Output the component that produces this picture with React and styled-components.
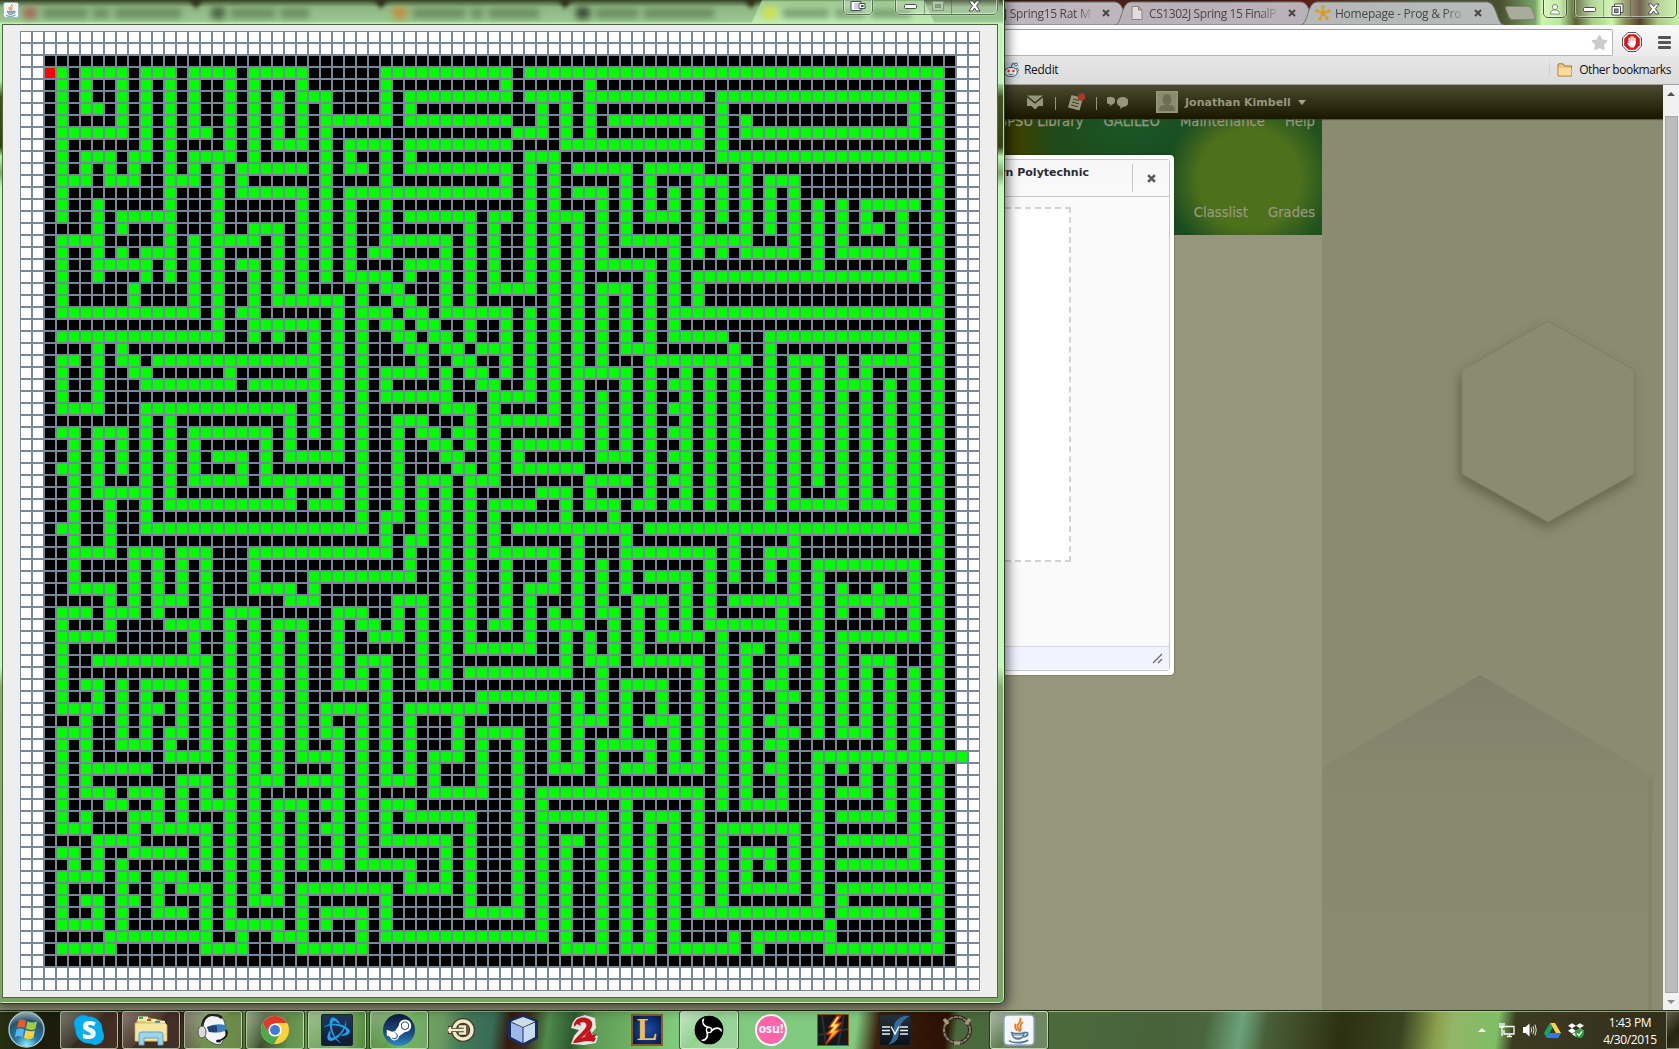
import React from "react";
import styled, { createGlobalStyle, css } from "styled-components";
import { FaSteamSymbol, FaDropbox, FaStar } from "react-icons/fa";
import { SiBattledotnet } from "react-icons/si";

const ui = `"Open Sans", "Noto Sans", sans-serif`;
const verdana = `"DejaVu Sans", sans-serif`;

const Global = createGlobalStyle`
  * { box-sizing: border-box; }
  body { margin: 0; overflow: hidden; font-family: ${ui}; }
`;

/* ---------- maze data: open cells of each row, from row 3 on ---------- */
const MAZE_ROWS = `3 5-8 10-12 14-17 19-23 30-40 42-76
3 5 8 10 12 14 17 19 23 30 40 47 76
3 5 8 10 12 14 17 19 21 23-25 30 32-40 42-45 47-56 58-74 76
3 5-6 8 10 12 14 17 19 21 23 25 30 32 43 45 47 58 74 76
3 8 10 12 14 17 19 21 23 25-30 32-40 43 45 47 49-56 58 60 74 76
3-8 10 12 14-15 17 19 21 23 25 41-43 45 47 56 58 60-74 76
3 10 12 17 19 21-23 25 27-30 32-40 45-56 58 76
3 5-7 9-10 12 14-17 19 25 27 30 32 42-44 58-76
3 5 7 9 12 14 16 18-23 25 27-28 30 32-40 42 44 46-50 52-56 60 76
3-5 7-9 12-14 16 18 25 30 40 42 44 50 52 56-58 60 62-64 76
3 12 16 18-23 25 27-40 42 44 46-48 50 52 54 56 58 60 62 64 76
3 6 12 16 23 25 27 30 42 44 48 50 52 54 56 58 60 62 64 66 68 70-74 76
3 6 8-12 16 23 25 27 30 32-37 39-40 42 44-46 48 50 52-54 56 58 60 62 64 66 68 70 73 76
6 8 12 16 19-21 23 25 27 30 37 39 42 44 46 48 50 56 60 62 64 66 68 70-71 73 76
3-6 12 14 16-19 21 23 25 27 30-35 37 39 42 44 46 48 50-54 56-60 64 66 68 73 76
3 6 8 10-12 14 16 21 23 25 27 29-30 35 37 39 42 44 46 48 54 56 58 60-64 66 68-74 76
3 6-10 12 14 16 18-19 21 23 25 27 32-35 37 39 42 44 46 48-52 54 66 74 76
3 6 10 12 14 16 19 21 23 25 27-30 32 35 37 39 42 44 46 52 54 56-74 76
3 9 14 16 19 21 23 28 30-31 35 37 39-42 44 46 48-50 52 54 56 76
3 9 14 16 19 21-26 28 31-32 35 37 44 46 48 50 52 54 56 76
3-14 16 18-19 26 28-30 32-33 35-40 42 44 46 48 50 52 54-76
16 19-24 26 28 30-31 33-34 37 40 42 44 46 48 50 52 54 76
3-16 19 21 24 26 28 31-32 34-35 37 40 42 44 46 48 50 52 54-58 62-74 76
6 8 24 26 28 32-33 35-36 38-40 42 44 46 48 50-52 59 62 74 76
3-4 6 8-9 11-24 26 28 33 36-37 40 42 44 46 48 52-60 62 64-66 68 70-74 76
3 6 9-10 17 24 26 28 30-33 35 37-38 40 42 44 46-50 52 55 57 59 62 64 66 68 70 74 76
3 6 10-17 19-24 26 28 30 35 38-39 42 44 46 50 52 54-55 57 59 62 64 66 68-70 72 74 76
3 6 24 26 28 30-35 39-42 44 46 48 50 52 55 57 59 62 64 66 68 70 72 74 76
3-6 10-22 24 26 28 35-37 39 44 46 48 50 52 54-55 57 59 62 64 66 68 70 72 74 76
10 12 22 24 26 28 31-33 37 39-44 46 48 50 52 55 57 59 62 64 66 68 70 72 74 76
3-4 6-8 10 12 14-20 22 24 26 28 31 33-34 36-37 39 46 48 50 52 54-55 57 59 62 64 66 68 70 72 74 76
4 6 8 10 12 14 20 22 26 28 31 34-35 37 39 41-46 48 50 52 55 57 59 62 64 66 68 70 72 74 76
4 6 8 10 12 14 16-18 20 22-26 28 31 35-36 39 41 48-50 52 54-55 57 59 62 64 66 68 70 72 74 76
3-4 6 8 10 12 14 18 20 28 31 36-37 39 41-46 52 55 57 59 62 64 66 68 70 72 74 76
4 6 10 12 14-18 20-26 28 31 33-35 37-39 47-50 52 54-55 57 59 62 64 66 68 70 72 74 76
4 6-10 12 22 26 28 31 33 35 37 43-45 47 52 55 57 59 62 64 68 70 72 74 76
4 7 10 12-22 24-26 28 31 33 35 37 39-42 45 47-49 51-52 54-55 57 59 62 64-68 70-72 74 76
4 7 10 28 30-31 33 35 37 39 45 49 74 76
3-4 7 10-28 30 33 35 37 39 41-50 52-74 76
4 7 30 32-33 35 37 39 46 50 59 64 76
4-7 9-11 13-15 19-30 32 35 37 39-44 46 50-57 59 62-64 76
4 9 11 13 15 19 32 35 37 40 44 46 48 50 57 59 62 64 66-74 76
4 9 11 13 15 19 24-32 35 37 40 44 46 48 50 52-55 57 59 62 64 66 74 76
4-7 9 11 13 15 19-22 24 35 37 40 42-44 46 48 50 55 57 64 66 68 71 74 76
7 9 11-13 15 22-24 31-33 35 37 40 42 46 48 51-53 55 57 59-64 66 68-74 76
3-5 7-9 11 15 17-19 26-28 31 33 35 37 40 42 44 46 48-49 51 53 55 57 63 66 68 71 74 76
3 7 12-15 17 19 21-23 26 28-29 31 33 35 37 39-40 42 44-46 49 51 53 55 57-63 66 74 76
3-7 14 17 19 21 23 26 29-31 33 35 37 42 45 47 49 51 53-56 58 63-64 66 68-74 76
3 14 17 19 21 23 26 33 35 37-42 45 47 49 51 58 60-61 63 66 68 76
3 6-15 17 19 21 23 26 28-30 33 35 45 47-49 51-56 58 60 63-64 66 68 70-72 76
3 15 17 19 21 23 26 28 30 33 35 37-45 48 56 58 60 63 66 68 70 72 74 76
3 5-6 8 10-13 15 17 19 21 23 26-28 30 33-35 48 50-53 56 58 60 62-63 66 68 70 72 74 76
3 6 8 10 13 15 17 19 21 23 30 38-44 46 48 50 53 56 58 60 63-64 66 68 70 72 74 76
3-6 8 10-11 13 15 17 19 21 23 25-28 30 32-38 44 46 48 50 53 56 58 60 63 66 68 70 72 74 76
5 8 10 13 15 17 19 21 23 25 28 30 32 36 44 46-48 50 52-54 56 58 60 62-63 66 68 70 72 74 76
3-5 8 10 12-13 15 17 19 21 23 25-26 28 30 32 36 38-41 44 46 50 54 56 58 60 63-64 66 68-70 72 74 76
3 5 8-10 12 15 17 19 21 23 26 28 30 32 36 38 41 44 46 48-52 54 56 58 60 62-63 72 74 76
3 5 12-15 17 19 21 23-26 28 30 32 34-36 38 41 44 46 48 52 54 56 58 60 63 66-78
3 5-10 17 19 21 26 28 30 32 34 38 41 44-46 48 50-52 54-56 58 60 62-63 66 68 70 72 74 76
3 5 13-15 17 19-21 23-26 28 30-32 34 38 41 48 58 60 63 66 70 72 74 76
3 5-7 9-11 13 15 17 19 26 28 34-38 41 43-56 58 60 63 66 68-70 72 74 76
3 7-8 11 13 15-17 19 21-23 25-26 28 30-32 41 43 50 56 58 60-63 66 72 74 76
3 5 9-11 13 17 19 21 23 26 28 30 32-37 41 43-48 50 52-54 56 66 68-72 74 76
3-5 9 11-15 17 19 21 23 25-26 28 30 37 41 43 48 50 52 54 56 58-64 66 74 76
6-9 15 17 19 21 23 26 28 30-35 37 41 43 45-46 48 50 52 54 56 58 64 66 68-74 76
3-4 6 9-13 15 17 19 21 23 26 28 35 37 41 43 45 48 50 52 54 56 58 60-62 64 66 74 76
4 6 8 15 17 19 21 23 25-26 28-32 35 37 41 43 45 48 50 52 54 56 58 60 62 64 66 68-74 76
3-6 8-9 11-13 17 19 21 32 35 37 41 43 45 48 50 52 54 56 58 60 64 66 76
3 8 11 13-15 17 19 21 23-30 32-35 37 41 43 45 48 50 52 54 56 58 60-64 66 68-76
3 5-6 8-9 11 15 17 19-21 23 30 37 41 43 45 48 50 52 54 56 58 66 68 76
3 6 8 11-13 15 17 23 25-28 30 37-41 43 45 48 50 52 54 56-66 68-74 76
3-6 8 15 17-21 23 25 28 30 43 45 48 50 52 54 67 76
7-15 18 21-23 28 30-43 45 48 50 52 54 59 61-67 76
3-7 15-18 23-28 45-48 50-52 54-59 61 67-76`.split("\n");

const SIZE = 80;
const CELLS = (() => {
  const grid = [];
  for (let r = 0; r < SIZE; r++)
    for (let c = 0; c < SIZE; c++)
      grid.push(r < 2 || r > 77 || c < 2 || c > 77 ? "outside" : "wall");
  MAZE_ROWS.forEach((row, i) => {
    row.split(" ").forEach((span) => {
      const [a, b = a] = span.split("-").map(Number);
      for (let c = a; c <= b; c++) grid[(i + 3) * SIZE + c] = "path";
    });
  });
  grid[3 * SIZE + 2] = "rat";
  return grid;
})();

const CELL_COLORS = { outside: "#fff", wall: "#000", path: "#0f0", rat: "#f00" };

/* ---------- desktop ---------- */
const Desktop = styled.div`
  position: relative;
  width: 1679px;
  height: 1049px;
  overflow: hidden;
  display: flex;
  flex-direction: column;
  background: #96967c;
`;

/* ---------- browser window ---------- */
const Browser = styled.div`
  height: 1010px;
  display: flex;
  flex-direction: column;
`;
const TabStrip = styled.div`
  height: 25px;
  flex: none;
  display: flex;
  align-items: flex-end;
  padding-left: 929px;
  position: relative;
  background: linear-gradient(90deg, #2f160f 0 1000px, #4a2018 1120px, #2d1614 1200px, #5a1f17 1300px, #46502c 1420px, #4a4f30 1500px,
    #7aa568 1535px, #cdf7ab 1542px, #b8e89a 1560px, #566230 1576px, #a5cd84 1592px, #c8f5a6 1612px, #8a8f5a 1625px, #53402a 1640px, #a8cc86 1658px, #c4f0a4 1679px);
`;
const TabShape = styled.svg`
  position: absolute;
  inset: 0;
  width: 100%;
  height: 100%;
`;
const Tab = styled.div`
  position: relative;
  width: 203px;
  height: 24px;
  margin-right: -17px;
  padding: 0 17px 0 14px;
  display: flex;
  align-items: center;
  font-size: 12px;
  color: #4b4544;
`;
const TabIcon = styled.svg`
  position: relative;
  width: 16px;
  height: 16px;
  flex: none;
`;
const TabTitle = styled.span`
  position: relative;
  flex: none;
  margin-left: ${(p) => p.$ml}px;
  white-space: nowrap;
  letter-spacing: ${(p) => p.$ls || 0}px;
  mask-image: linear-gradient(90deg, #000 86%, rgba(0, 0, 0, 0.25));
`;
const TabClose = styled.div`
  position: absolute;
  right: 22px;
  top: 8px;
  svg { display: block; }
`;
const NewTab = styled.div`
  width: 27px;
  height: 14px;
  margin: 0 0 5px 20px;
  border-radius: 3px;
  transform: skewX(22deg);
  background: #a9ab9c;
  border: 1px solid #84876f;
`;
const Controls = styled.div`
  position: absolute;
  top: -4px;
  right: ${(p) => p.$right}px;
  height: 22px;
  display: flex;
  border: 1px solid ${(p) => p.$line || "#4a5638"};
  border-radius: 0 0 5px 5px;
  box-shadow: inset 0 0 0 1px rgba(255, 255, 255, 0.45), 0 0 0 1px rgba(255, 255, 255, 0.2);
`;
const Control = styled.div`
  width: ${(p) => p.$w}px;
  display: grid;
  place-items: center;
  padding-top: 4px;
  background: rgba(255, 255, 255, 0.18);
  & + & { border-left: 1px solid rgba(60, 80, 50, 0.45); }
`;

const Toolbar = styled.div`
  height: 31px;
  flex: none;
  display: flex;
  align-items: center;
  padding: 0 8px 0 0;
  background: linear-gradient(#fafafa, #ebebeb);
`;
const Omnibox = styled.div`
  width: 1613px;
  height: 27px;
  margin-top: 4px;
  border: 1px solid #b4b4b4;
  border-top-color: #9d9d9d;
  border-radius: 2px;
  background: #fff;
  display: flex;
  align-items: center;
  justify-content: flex-end;
  padding-right: 4px;
  color: #cbcbcb;
  font-size: 17px;
`;
const BlockBadge = styled.svg`
  width: 20px;
  height: 20px;
  margin: 3px 0 0 9px;
`;
const Menu = styled.div`
  width: 13px;
  height: 13px;
  margin: 3px 0 0 auto;
  display: flex;
  flex-direction: column;
  justify-content: space-between;
  &::before, &::after, & > i { content: ""; height: 3px; background: #565656; border-radius: 1px; }
`;
const BookmarksBar = styled.div`
  height: 29px;
  flex: none;
  display: flex;
  align-items: center;
  padding: 0 8px 1px 1003px;
  background: linear-gradient(#e6e6e6, #dcdcdc);
  border-bottom: 1px solid #a0a0a0;
  font-size: 12px;
  color: #111;
`;
const Bookmark = styled.div`
  display: flex;
  align-items: center;
  gap: ${(p) => p.$gap}px;
  letter-spacing: ${(p) => p.$ls || 0}px;
  svg { display: block; }
`;
const Separator = styled.div`
  width: 1px;
  height: 22px;
  margin: 0 7px 0 auto;
  background: linear-gradient(#dde3ea, #bccbdc, #dde3ea);
`;

const Viewport = styled.div`
  flex: 1;
  display: flex;
  min-height: 0;
`;
const Page = styled.div`
  position: relative;
  isolation: isolate;
  width: 1663px;
  overflow: hidden;
  display: flex;
  flex-direction: column;
  background: #8b8b72;
`;
const NavBar = styled.div`
  height: 34px;
  flex: none;
  display: flex;
  align-items: center;
  padding-left: 1026px;
  background: linear-gradient(#4c4b31, #1b1900 95%);
  box-shadow: 0 1px 1px rgba(60, 58, 30, 0.6);
  position: relative;
  z-index: 1;
`;
const NavIcon = styled.svg`
  width: ${(p) => p.$w}px;
  height: 22px;
  margin-left: ${(p) => p.$ml || 0}px;
  flex: none;
`;
const NavDivider = styled.div`
  width: 1px;
  height: 13px;
  margin: 3px 0 0 ${(p) => p.$ml}px;
  background: #96967c;
`;
const Avatar = styled.svg`
  width: 22px;
  height: 22px;
  margin-left: 28px;
`;
const UserName = styled.div`
  margin-left: 7px;
  font: bold 11px ${verdana};
  letter-spacing: 0;
  color: #96967c;
  white-space: nowrap;
`;
const Caret = styled.div`
  margin-left: 7px;
  border: 4px solid transparent;
  border-top: 5px solid #a5a58a;
  border-bottom: 0;
`;
const PageBody = styled.div`
  width: 1322px;
  flex: 1;
  background: #96967c;
`;
const Banner = styled.div`
  height: 116px;
  display: flex;
  flex-direction: column;
  justify-content: space-between;
  align-items: flex-end;
  padding: 0 7px 14px 0;
  background:
    radial-gradient(ellipse 84px 82px at 1249px 60px, #4d701c 0 60%, rgba(77, 112, 28, 0) 100%),
    radial-gradient(ellipse 70px 50px at 1130px 0, #195a29, rgba(25, 90, 41, 0)),
    linear-gradient(90deg, #313500 1004px, #3b4104 1020px, #204a1a 1055px, #194a20 1170px, #20521f 1322px);
  overflow: hidden;
`;
const NavLinks = styled.div`
  display: flex;
  gap: 20px;
  margin-top: ${(p) => p.$mt || 0}px;
  font: 13.2px/16px ${verdana};
  -webkit-text-stroke: 0.25px #97977d;
  color: #97977d;
  white-space: nowrap;
`;
const Hexes = styled.svg`
  position: absolute;
  left: 1322px;
  top: 34px;
`;
const Dialog = styled.div`
  position: absolute;
  left: 600px;
  top: 70px;
  width: 574px;
  height: 520px;
  z-index: 2;
  padding: 4px;
  border-radius: 4px;
  background: #fff;
  box-shadow: 0 0 2px rgba(0, 0, 0, 0.45);
`;
const DialogFrame = styled.div`
  height: 100%;
  border: 1px solid #c9c9c9;
  border-radius: 3px;
  display: flex;
  flex-direction: column;
  background: #fafafa;
`;
const DialogHeader = styled.div`
  height: 37px;
  display: flex;
  border-bottom: 1px solid #c8c8c8;
  background: linear-gradient(#f7f7f7, #fafafa);
`;
const DialogTitle = styled.div`
  flex: 1;
  padding: 6px 43px 0 0;
  text-align: right;
  white-space: nowrap;
  font: bold 11px/14px ${verdana};
  color: #2c2a30;
`;
const DialogClose = styled.div`
  width: 37px;
  height: 28px;
  margin-top: 4px;
  border-left: 1px solid #c6c6c6;
  display: grid;
  place-items: center;
`;
const DialogBody = styled.div`
  flex: 1;
  padding: 10px 98px 84px 20px;
`;
const DropZone = styled.div`
  height: 100%;
  border: 2px dashed #d2d2d2;
  background: #fff;
`;
const DialogFooter = styled.div`
  height: 24px;
  border-top: 1px solid #d4d6e0;
  background: #f1f3ff;
  display: flex;
  justify-content: flex-end;
  align-items: center;
  padding-right: 6px;
`;
const Scrollbar = styled.div`
  width: 16px;
  background: #f1f1f1;
  display: flex;
  flex-direction: column;
  align-items: center;
`;
const ScrollArrow = styled.div`
  height: ${(p) => p.$h}px;
  width: 16px;
  display: grid;
  place-items: center;
  &::before {
    content: "";
    border: 4px solid transparent;
    ${(p) => p.$down ? css`border-top-color: #888; border-bottom: 0;` : css`border-bottom-color: #505050; border-top: 0;`}
  }
  ${(p) => !p.$down && css`padding-bottom: 13px;`}
`;
const ScrollThumb = styled.div`
  flex: 1;
  width: 13px;
  background: #bcbcbc;
  border: 1px solid #a8a8a8;
`;

/* ---------- maze window ---------- */
const MazeWindow = styled.div`
  position: absolute;
  z-index: 5;
  left: -4px;
  top: -4px;
  width: 1009px;
  height: 1008px;
  border: 1px solid #2e3c26;
  border-radius: 6px;
  padding: 28px 7px 7px 6px;
  background:
    linear-gradient(90deg, transparent 1000px, #caf9c3 1001px, #b8efb0 1004px, #d9ffd4 1007px) 0 27px / 100% 60px no-repeat,
    linear-gradient(#b8efb0 0 84px, #41541e 100px, #33430e 150px, #bdf5ae 160px, #7ea86c 176px, #c3f8bb 190px, #c3f8bb 670px, #86ad72 690px, #7da465 100%);
  box-shadow: inset 0 0 0 1px rgba(214, 255, 205, 0.8), 1px 2px 12px 2px rgba(0, 0, 0, 0.55);
`;
const TitleBar = styled.div`
  position: absolute;
  left: 1px;
  right: 1px;
  top: 0;
  height: 28px;
  overflow: hidden;
  border-radius: 0 5px 0 0;
  background: linear-gradient(#33431f 3px, #5c7650 6px, #8fb583 10px, #98c78f 24px, #caf3c0 27px);
`;
const TabGhost = styled.div`
  position: absolute;
  left: ${(p) => p.$x}px;
  top: 10px;
  display: flex;
  gap: 6px;
  filter: blur(3px);
  & > i { height: 9px; margin-top: 2px; background: rgba(50, 72, 44, 0.42); }
  & > b { width: 14px; height: 12px; border-radius: 4px; background: ${(p) => p.$dot}; }
`;
const TabGap = styled.div`
  position: absolute;
  top: 2px;
  left: ${(p) => p.$x}px;
  border: 7px solid transparent;
  border-top: 10px solid #2c2c14;
  border-bottom: 0;
  filter: blur(2px);
`;
const ActiveGhost = styled.div`
  position: absolute;
  left: 752px;
  top: 3px;
  width: 186px;
  height: 26px;
  background: linear-gradient(#9cc98e, #c4f3bb);
  clip-path: polygon(12px 0, 174px 0, 186px 100%, 0 100%);
  filter: blur(1px);
`;
const AppIcon = styled.div`
  position: absolute;
  left: 5px;
  top: 5px;
  svg { display: block; }
`;
const MazePanel = styled.div`
  position: relative;
  height: 972px;
  padding: 6px 0 0 17px;
  outline: 1px solid #4c6640;
  background: #eee;
`;
const MazeGrid = styled.div`
  display: grid;
  grid-template-columns: repeat(${SIZE}, 12px);
  grid-auto-rows: 12px;
  width: 960px;
`;
const Cell = styled.div`
  border: 1px solid #778899;
  background: ${(p) => CELL_COLORS[p.$kind]};
`;

/* ---------- taskbar ---------- */
const Taskbar = styled.div`
  position: relative;
  height: 39px;
  display: flex;
  align-items: stretch;
  border-top: 1px solid #1f2b16;
  box-shadow: inset 0 1px 0 rgba(190, 225, 165, 0.65);
  background:
    linear-gradient(100deg, transparent 1190px, rgba(130, 200, 160, 0.6) 1225px, transparent 1250px),
    linear-gradient(98deg, #27300f 0, #1a1c0c 50px, #3a2116 120px, #37221a 180px, #6a8a48 205px, #62833e 240px, #2f4420 262px, #5c8a44 290px,
      #6fae5a 340px, #3f7a2c 372px, #68b452 400px, #6c9a62 440px, #417858 462px, #386c55 490px, #331c10 507px, #3a2c18 525px, #4d8a4c 545px,
      #2f5a30 570px, #5d9a55 590px, #72b866 640px, #80ca7e 670px, #7fca80 850px, #3b200c 872px, #2c1003 940px, #4a683c 950px, #4b6a3c 1060px,
      #48623a 1150px, #4c6a42 1240px, #3f4a26 1290px, #2d3012 1330px, #3a4320 1390px, #8aa04e 1425px, #93b567 1440px, #7fbf66 1485px, #3b3c20 1502px, #3a351f 1560px, #2f2c18 1679px);
`;
const Start = styled.div`
  width: 58px;
  padding: 0 0 0 8px;
`;
const Slot = styled.div`
  width: 62px;
  padding: 0 2px;
  display: flex;
`;
const SlotFace = styled.div`
  flex: 1;
  display: grid;
  place-items: center;
  border-radius: 3px;
  ${(p) => p.$open && css`
    border: 1px solid rgba(225, 240, 210, 0.65);
    box-shadow: 0 0 0 1px rgba(20, 30, 12, 0.65);
    background: linear-gradient(135deg, rgba(255, 255, 255, ${p.$open === "active" ? 0.55 : 0.4}), rgba(255, 255, 255, 0.12) 48%, rgba(255, 255, 255, ${p.$open === "active" ? 0.2 : 0.06}) 50%);
  `}
`;
const Tray = styled.div`
  margin-left: auto;
  display: flex;
  align-items: center;
  gap: 7px;
  padding-right: 9px;
`;
const TrayCaret = styled.div`
  border: 4px solid transparent;
  border-bottom: 4px solid #eee;
  border-top: 0;
  margin-right: 6px;
`;
const Clock = styled.div`
  width: 54px;
  margin-left: 11px;
  padding-top: 2px;
  text-align: center;
  color: #fff;
  font-size: 12px;
  line-height: 17px;
  white-space: nowrap;
  letter-spacing: -0.35px;
`;
const ShowDesktop = styled.div`
  width: 13px;
  border: 1px solid #8f937c;
  border-right: 0;
  background: linear-gradient(135deg, #5d5f4c, #25240f 60%, #34331b);
`;

/* ---------- drawings ---------- */
const TabBack = ({ tint }) => (
  <TabShape viewBox="0 0 203 24">
    <path d="M0 24 C7 24 6 1 16 1 H186 C196 1 196 24 203 24 Z" fill={tint} stroke="#77726f" />
  </TabShape>
);
const CrossIcon = ({ size = 8, w = 2, color = "#4b4544" }) => (
  <svg width={size} height={size} viewBox="0 0 8 8">
    <path d="M1 1 L7 7 M7 1 L1 7" stroke={color} strokeWidth={w} />
  </svg>
);
const Minimize = ({ fill = "#fff" }) => (
  <svg width="13" height="7" viewBox="0 0 13 7"><rect x=".5" y="1.5" width="12" height="4" rx="1" fill={fill} stroke="#4b5148" /></svg>
);
const CloseX = () => (
  <svg width="13" height="12" viewBox="0 0 13 12">
    <path d="M1 1 H4.5 L6.5 3.5 L8.5 1 H12 L8.5 5.8 L12 11 H8.5 L6.5 8 L4.5 11 H1 L4.5 5.8 Z" fill="#fff" stroke="#4b4f55" />
  </svg>
);
const JavaIcon = ({ size }) => (
  <svg width={size} height={size} viewBox="0 0 32 32">
    <rect x="1" y="1" width="30" height="30" rx="4" fill="#f5f6f8" stroke="#8fa9c4" strokeWidth="1.4" />
    <path d="M17 4 C20 8 12 10 15 14 C16 16 17 16 16 18 M20 8 C15 11 19 13 17 17 M13 10 C10 13 14 15 14 17" fill="none" stroke="#e97a20" strokeWidth="1.8" />
    <path d="M8 18 C10 20 20 20 22 18 M9 18.5 C9 22 11 25 15 25 C19 25 21 22 21 18.5 M21 19 C26 17 26 22 20.5 23 M6 26.5 C9 29.5 21 29.5 25 26" fill="none" stroke="#50789a" strokeWidth="1.7" />
    <path d="M10 21 H20 M12 24 H18" stroke="#50789a" strokeWidth="1.2" />
  </svg>
);
const HexagonArt = () => (
  <Hexes width="341" height="891" viewBox="1322 119 341 891">
    <defs>
      <filter id="hexShadow" x="-20%" y="-20%" width="140%" height="150%">
        <feDropShadow dx="-2" dy="6" stdDeviation="6" floodColor="#4c4c34" floodOpacity=".6" />
      </filter>
      <linearGradient id="bigHex" x1="0" y1="0" x2="0" y2="1">
        <stop offset="0" stopColor="#80806a" />
        <stop offset=".3" stopColor="#88886f" />
        <stop offset="1" stopColor="#8b8b72" />
      </linearGradient>
    </defs>
    <path d="M1548 321 L1634 370 V474 L1548 522 L1462 474 V370 Z" fill="#8b8b72" stroke="#7e7e66" filter="url(#hexShadow)" />
    <path d="M1322 768 L1480 675 L1654 776 V1010 H1322 Z" fill="url(#bigHex)" />
    <path d="M1650 778 V1010" stroke="#83836b" strokeWidth="3" />
  </Hexes>
);

const StartOrb = () => (
  <svg width="37" height="37" viewBox="0 0 38 38">
    <defs>
      <radialGradient id="orb" cx=".5" cy=".95" r=".95">
        <stop offset="0" stopColor="#8ff0ff" /><stop offset=".35" stopColor="#2479a8" /><stop offset=".75" stopColor="#27536f" /><stop offset="1" stopColor="#a9c2cc" />
      </radialGradient>
    </defs>
    <circle cx="19" cy="19" r="18" fill="url(#orb)" stroke="#b3c9cc" strokeWidth="1.4" />
    <path d="M11 10 Q14.500 7.500 18.500 10 L17 17.500 Q13 15.500 9 17.500 Z" fill="#ee5a2a" />
    <path d="M20 10.500 Q25 13 30 10.500 L28 18.500 Q23 20.500 18.500 18 Z" fill="#9bcf3c" />
    <path d="M8.600 19 Q12.500 17 16.600 19 L15 27 Q11 24.500 7 27 Z" fill="#54b6f0" />
    <path d="M18 19.600 Q23 22 27.600 20 L26 27.500 Q21 30 16.500 27.500 Z" fill="#ffd23a" />
  </svg>
);
const Skype = () => (
  <svg width="32" height="32" viewBox="0 0 32 32">
    <circle cx="10" cy="10" r="9" fill="#00aff0" /><circle cx="22" cy="22" r="9" fill="#00aff0" /><circle cx="16" cy="16" r="13.500" fill="#00aff0" />
    <text x="16" y="24.500" textAnchor="middle" fontFamily="Open Sans" fontSize="25" fontWeight="800" fill="#fff">S</text>
  </svg>
);
const Explorer = () => (
  <svg width="34" height="32" viewBox="0 0 34 32">
    <path d="M3 6 L10 3 L30 7 L32 12 V27 H2 Z" fill="#e9cf7c" stroke="#b9993f" strokeWidth=".8" />
    <rect x="4" y="2.500" width="10" height="4" fill="#f7f3da" /><rect x="5" y="3" width="4" height="2" fill="#2eb62c" />
    <rect x="12" y="5" width="10" height="3" fill="#f7f3da" /><rect x="13" y="5" width="4" height="2" fill="#d84426" />
    <rect x="20" y="7" width="11" height="3" fill="#f7f3da" /><rect x="21" y="7" width="5" height="2" fill="#2d86d8" />
    <path d="M1 9 H31 L33 11 V27 H1 Z" fill="#f6e59d" stroke="#cdb35c" strokeWidth=".7" />
    <path d="M5 31 V20 Q5 18 8 18 H26 Q29 18 29 20 V31 H24 V24 H10 V31 Z" fill="#9fd3ea" stroke="#5aa6cf" strokeWidth="1" />
  </svg>
);
const Headset = () => (
  <svg width="32" height="32" viewBox="0 0 32 32">
    <path d="M6 14 C6 4 12 1 17 1 C25 1 29 7 28 14 L29 22 L24 30 Q20 32 16 29 C9 26 6 21 6 14 Z" fill="#f4f4f4" stroke="#555" />
    <path d="M5 13 C6 3 12 0 17 1 C21 1 23 2 25 4" fill="none" stroke="#222" strokeWidth="2.500" />
    <path d="M10 13 Q18 9 28 11 V17 Q20 20 12 18 Z" fill="#3b7fc4" /><path d="M10 13 Q18 10 20 12 V18 H12 Z" fill="#1e456e" />
    <ellipse cx="5" cy="18" rx="4" ry="6" fill="#d9d9d9" stroke="#555" />
    <path d="M29 16 Q33 22 22 27" fill="none" stroke="#111" strokeWidth="1.500" /><ellipse cx="21.500" cy="27" rx="2.500" ry="1.500" fill="#111" />
  </svg>
);
const Chrome = () => (
  <svg width="30" height="30" viewBox="0 0 30 30">
    <circle cx="15" cy="15" r="14" fill="#fdd23c" />
    <path d="M2.900 8 A14 14 0 0 0 14 29 L20.500 18 L15 15 L9 18.500 Z" fill="#4aa94a" />
    <path d="M2.900 8 A14 14 0 0 1 27.100 8 H15 V15 L9 18.500 Z" fill="#dd3a2b" />
    <circle cx="15" cy="15" r="6.600" fill="#fff" /><circle cx="15" cy="15" r="5" fill="#3d7ad6" />
  </svg>
);
const Tile = styled.div`
  width: 32px;
  height: 32px;
  display: grid;
  place-items: center;
  border-radius: ${(p) => p.$r || 0}px;
  border: ${(p) => p.$border || "1px solid #1e2430"};
  background: ${(p) => p.$bg};
  color: ${(p) => p.$fg || "#fff"};
  font-size: ${(p) => p.$fs || 26}px;
  overflow: hidden;
  svg { display: block; }
`;
const Osu = styled(Tile)`
  border-radius: 50%;
  border: 2px solid #fff;
  background: #ff66aa;
  font: bold 12px/1 ${ui};
  padding-bottom: 2px;
  overflow: visible;
`;
const League = styled(Tile)`
  font: bold 31px/28px "Liberation Serif", serif;
  overflow: visible;
`;
const Obs = () => (
  <svg width="30" height="30" viewBox="0 0 30 30">
    <circle cx="15" cy="15" r="14" fill="#000" />
    {[0, 120, 240].map((a) => (
      <g key={a} transform={`rotate(${a} 15 15)`} fill="none" stroke="#fff" strokeLinecap="round">
        <path d="M15 12.500 C9.500 11.500 7.500 7.500 9.500 3.500" strokeWidth="1.700" />
      </g>
    ))}
    <circle cx="15" cy="15" r="2.600" fill="#000" stroke="#fff" strokeWidth="1.300" />
    <circle cx="15" cy="15" r="13.600" fill="none" stroke="#000" strokeWidth="1.500" />
  </svg>
);
const KeyRing = () => (
  <svg width="32" height="26" viewBox="0 0 32 26">
    <circle cx="18" cy="13" r="9" fill="none" stroke="#4a3a22" strokeWidth="6" />
    <circle cx="18" cy="13" r="9" fill="none" stroke="#f3e9cc" strokeWidth="3.500" />
    <path d="M3 13 H19 M14 9 H20 V17 H14 M5 9 V17" fill="none" stroke="#4a3a22" strokeWidth="4" />
    <path d="M3 13 H19 M14 9.500 H20 V16.500 H14 M5 10 V16" fill="none" stroke="#f3e9cc" strokeWidth="2.400" />
  </svg>
);
const Cube = () => (
  <svg width="32" height="32" viewBox="0 0 32 32">
    <path d="M16 1.500 L30 7 V24 L16 31 L2 24 V7 Z" fill="#1a2a5e" stroke="#1a2a5e" strokeWidth="2" strokeLinejoin="round" />
    <path d="M16 3 L28 7.500 L16 13 L4 7.500 Z" fill="#cfe0e4" /><path d="M4 8.500 L15.500 13.500 V29 L4 23 Z" fill="#9db9ea" /><path d="M28 8.500 L16.500 13.500 V29 L28 23 Z" fill="#c9dcf5" />
  </svg>
);
const Dragon = () => (
  <svg width="32" height="32" viewBox="0 0 32 32">
    <path d="M7 4 L16 1 L26 4 L27 14 L22 20 L29 22 L27 29 L15 31 L2 30 L5 22 L10 16 L2 14 L4 8 Z" fill="#f4f4f0" opacity=".9" />
    <path d="M5 10 C7 3 15 2 20 5 C26 9 23 15 18 19 L12 24 C18 21 24 23 27 24 L25 28 C18 25 12 29 4 29 C6 24 14 18 17 13 C19 9 14 7 11 9 L12 12 L8 10 L5 13 Z" fill="#c3131b" />
    <path d="M15 22 L21 16 L23 21 L28 20 L24 25 Z" fill="#c3131b" />
  </svg>
);
const Bolt = () => (
  <svg width="30" height="30" viewBox="0 0 30 30">
    <path d="M4 0 L8 30 M26 0 L20 30 M0 20 L30 14" stroke="#2d3030" strokeWidth="2" />
    <path d="M19 1 L11 12 H15 L9 19 H13 L8 29 L22 15 H18 L23 8 H18 L23 1 Z" fill="#ffb01f" stroke="#c2341a" strokeWidth="1.300" />
    <path d="M20 2 L14 11 H18 L13 17" fill="none" stroke="#fff07a" strokeWidth="1.500" />
  </svg>
);
const Eve = () => (
  <svg width="30" height="30" viewBox="0 0 30 30">
    <path d="M8 30 C28 24 10 12 30 1 L24 1 C6 8 20 18 8 30 Z" fill="#3d7cb4" opacity=".8" />
    <path d="M2 12 H10 M2 15.500 H10 M2 19 H10 M11 11.500 L15 19 L19 11.500 M20 12 H28 M20 15.500 H28 M20 19 H28" fill="none" stroke="#eef2f4" strokeWidth="1.500" />
  </svg>
);
const Ring = () => (
  <svg width="32" height="32" viewBox="0 0 32 32" fill="none">
    <circle cx="16" cy="16" r="13" stroke="#2c2519" strokeWidth="4" /><circle cx="16" cy="16" r="13" stroke="#8a7d68" strokeWidth="2" strokeDasharray="4 .8" />
    <path d="M3 5 L7 10 M29 5 L25 10 M13 29 H19" stroke="#a99b83" strokeWidth="3.500" />
  </svg>
);
const Network = () => (
  <svg width="16" height="16" viewBox="0 0 16 16" fill="none" stroke="#fff" strokeWidth="1.300">
    <path d="M6 4.500 H15 V12 H5 V8 M8 14.500 H13 M10.500 12 V14.500 M1 1 V5 H5 V1 M3 1 V8 V14" />
  </svg>
);
const Volume = () => (
  <svg width="15" height="16" viewBox="0 0 15 16">
    <path d="M1 5 H3.500 L7.500 1.500 V14.500 L3.500 11 H1 Z" fill="#fff" />
    <path d="M9 5.500 Q10.500 8 9 10.500 M11 4 Q13 8 11 12 M13 2.500 Q15.500 8 13 13.500" fill="none" stroke="#ddd" strokeWidth="1" />
  </svg>
);
const Drive = () => (
  <svg width="17" height="15" viewBox="0 0 17 15">
    <path d="M6 0 H11 L17 10 H12 Z" fill="#ffcf48" /><path d="M6 0 L0 10 L2.700 15 L8.500 4.500 Z" fill="#11a861" /><path d="M5.500 10 H17 L14.300 15 H2.700 Z" fill="#3777e3" />
  </svg>
);
const DropTray = () => (
  <svg width="17" height="17" viewBox="0 0 17 17">
    <FaDropbox x="0" y="0" width="15" height="15" color="#fff" />
    <circle cx="11.500" cy="11.500" r="4.500" fill="#22a33a" /><path d="M9 11.500 L11 13.500 L14 9.500" stroke="#fff" strokeWidth="1.400" fill="none" />
  </svg>
);

const APPS = [
  { open: true, icon: <Skype /> },
  { open: true, icon: <Explorer /> },
  { open: true, icon: <Headset /> },
  { open: true, icon: <Chrome /> },
  { open: true, icon: <Tile $r={2} $bg="linear-gradient(#22375c,#101a33)" $fg="#1da2e8"><SiBattledotnet /></Tile> },
  { open: true, icon: <Tile $r={16} $border="0" $bg="linear-gradient(#0d1b3c,#1b4b80 60%,#2b8bc4)" $fs={28}><FaSteamSymbol /></Tile> },
  { icon: <KeyRing /> },
  { icon: <Cube /> },
  { icon: <Dragon /> },
  { icon: <League $border="2px solid #8a5a1e" $bg="radial-gradient(#1a4fa8,#06174a)" $fg="#f0bf52">L</League> },
  { open: "active", icon: <Obs /> },
  { icon: <Osu>osu!</Osu> },
  { icon: <Tile $border="1px solid #8a5a14" $bg="#14181a"><Bolt /></Tile> },
  { icon: <Tile $r={3} $bg="linear-gradient(#27323c,#0a1119)"><Eve /></Tile> },
  { icon: <Ring /> },
  { open: "active", icon: <JavaIcon size={32} /> },
];

const BrowserWindow = () => (
  <Browser>
    <TabStrip>
      <Tab>
        <TabBack tint="#bdb7bd" />
        <TabTitle $ml={61} $ls={-0.3}>J Spring15 Rat M</TabTitle>
        <TabClose><CrossIcon /></TabClose>
      </Tab>
      <Tab>
        <TabBack tint="#b9b3b9" />
        <TabIcon viewBox="0 0 16 16"><path d="M3 1.500 H9.500 L13 5 V14.500 H3 Z M9.500 1.500 V5 H13" fill="#e2dcdc" stroke="#8b8381" /></TabIcon>
        <TabTitle $ml={4} $ls={-0.42}>CS1302J Spring 15 FinalP</TabTitle>
        <TabClose><CrossIcon /></TabClose>
      </Tab>
      <Tab>
        <TabBack tint="#b5b9b8" />
        <TabIcon viewBox="0 0 16 16">
          <path d="M8 8 L8 2 M8 8 L2 6 M8 8 L14 6 M8 8 L5 14 M8 8 L12 13.500" stroke="#e09a20" strokeWidth="1.500" />
          <g fill="#e09a20"><circle cx="8" cy="8" r="2.800" /><circle cx="8" cy="2" r="1.800" /><circle cx="2" cy="6" r="1.800" /><circle cx="14" cy="6" r="1.800" /><circle cx="5" cy="14" r="1.800" /><circle cx="12" cy="13.500" r="1.800" /></g>
        </TabIcon>
        <TabTitle $ml={4} $ls={-0.25}>Homepage - Prog &amp; Pro</TabTitle>
        <TabClose><CrossIcon /></TabClose>
      </Tab>
      <NewTab />
      <Controls $right={112}>
        <Control $w={22}>
          <svg width="12" height="12" viewBox="0 0 12 12"><circle cx="6" cy="4" r="2.600" fill="#fff" stroke="#6a7a5c" strokeWidth=".8" /><path d="M1.500 11 Q1.500 7 6 7 Q10.500 7 10.500 11 Z" fill="#fff" stroke="#6a7a5c" strokeWidth=".8" /></svg>
        </Control>
      </Controls>
      <Controls $right={2}>
        <Control $w={28}><Minimize /></Control>
        <Control $w={27}>
          <svg width="13" height="13" viewBox="0 0 13 13"><path d="M3.500 1 H12 V9.500 H3.500 Z" fill="#fff" stroke="#4b4f55" /><path d="M1 3.500 H9.500 V12 H1 Z" fill="#fff" stroke="#4b4f55" /><rect x="3.500" y="6" width="3.500" height="3.500" fill="#9aa58c" stroke="#4b4f55" /></svg>
        </Control>
        <Control $w={46}><CloseX /></Control>
      </Controls>
    </TabStrip>
    <Toolbar>
      <Omnibox><FaStar /></Omnibox>
      <BlockBadge viewBox="0 0 20 20">
        <path d="M6 .5 H14 L19.500 6 V14 L14 19.500 H6 L.5 14 V6 Z" fill="#fff" stroke="#555" />
        <path d="M6.700 2.200 H13.300 L17.800 6.700 V13.300 L13.300 17.800 H6.700 L2.200 13.300 V6.700 Z" fill="#d8141a" />
        <path d="M7.200 10 V6.300 M9.100 10 V4.900 M11 10 V4.900 M12.900 10.500 V6.300" stroke="#fff" strokeWidth="1.500" strokeLinecap="round" />
        <path d="M6.500 9 H13.700 V12 L12 15.500 H8.500 L5 11.500 L6 10.500 L7 11.500 Z" fill="#fff" />
      </BlockBadge>
      <Menu><i /></Menu>
    </Toolbar>
    <BookmarksBar>
      <Bookmark $ls={-0.3} $gap={5}>
        <svg width="16" height="16" viewBox="0 0 16 16">
          <rect width="16" height="16" fill="#c4dcf2" />
          <path d="M8 5 L9.500 1.500 L13 2.500" stroke="#444" fill="none" /><circle cx="13" cy="2.500" r="1.300" fill="#fff" stroke="#444" strokeWidth=".8" />
          <circle cx="1.800" cy="8" r="1.500" fill="#fff" stroke="#444" strokeWidth=".7" /><circle cx="14" cy="8" r="1.500" fill="#fff" stroke="#444" strokeWidth=".7" />
          <ellipse cx="8" cy="10" rx="6.300" ry="4.600" fill="#fff" stroke="#444" strokeWidth=".9" />
          <circle cx="5.600" cy="9" r="1.300" fill="#e33" /><circle cx="10.400" cy="9" r="1.300" fill="#e33" />
          <path d="M5.500 12 Q8 13.500 10.500 12" stroke="#444" fill="none" strokeWidth=".8" />
        </svg>
        Reddit
      </Bookmark>
      <Separator />
      <Bookmark $ls={-0.45} $gap={6}>
        <svg width="16" height="14" viewBox="0 0 16 14"><path d="M1 12.500 V2 Q1 .8 2 .8 H6 L7.500 3 H14.500 V13 H1 Z" fill="#f3c682" stroke="#9b7336" /><path d="M1.500 5 H14.500 V12.500 H1.500 Z" fill="#ffd996" /></svg>
        Other bookmarks
      </Bookmark>
    </BookmarksBar>
    <Viewport>
      <Page>
        <NavBar>
          <NavIcon $w={18} viewBox="0 0 18 22">
            <path d="M1 4.500 H17 L9 11 Z M1 6.500 L9 12.800 L17 6.500 V15 H12.500 L9 18.500 L5.500 15 H1 Z" fill="#96967c" />
          </NavIcon>
          <NavDivider $ml={11} />
          <NavIcon $w={20} $ml={11} viewBox="0 0 20 22">
            <path d="M4.500 4 L16 7 L12.500 19.500 L1 16.500 Z" fill="#96967c" />
            <path d="M6 8 L12 9.500 M5 11 L12 12.800 M4 14 L11 15.800" stroke="#3a3920" />
            <circle cx="14.500" cy="6" r="3.800" fill="#a5392a" />
          </NavIcon>
          <NavDivider $ml={9} />
          <NavIcon $w={21} $ml={10} viewBox="0 0 21 22">
            <path d="M4.500 6 a4 3.800 0 1 0 -1 7.200 L2 15.500 L6 13.200 Q8 12.500 8.200 9.800 Q8 6.300 4.500 6 Z" fill="#96967c" />
            <path d="M15 6 a5.500 5 0 1 1 1 9.900 L13 18 L13.500 15.500 Q9.800 14 9.800 11 Q10 6.500 15 6 Z" fill="#96967c" />
          </NavIcon>
          <Avatar viewBox="0 0 22 22">
            <rect width="22" height="22" fill="#96967c" /><rect x="1.500" y="1.500" width="19" height="19" fill="#8a8a70" />
            <ellipse cx="11" cy="8.500" rx="4.300" ry="5.500" fill="#6d6d55" /><path d="M3 20 Q3 14.500 8 14 H14 Q19 14.500 19 20 Z" fill="#6d6d55" />
          </Avatar>
          <UserName>Jonathan Kimbell</UserName>
          <Caret />
        </NavBar>
        <PageBody>
          <Banner>
            <NavLinks $mt={-5}><span>SPSU Library</span><span>GALILEO</span><span>Maintenance</span><span>Help</span></NavLinks>
            <NavLinks><span>Classlist</span><span>Grades</span></NavLinks>
          </Banner>
        </PageBody>
        <HexagonArt />
        <Dialog>
          <DialogFrame>
            <DialogHeader>
              <DialogTitle>Southern Polytechnic</DialogTitle>
              <DialogClose><CrossIcon size={9} w={2.4} color="#5c5c5c" /></DialogClose>
            </DialogHeader>
            <DialogBody><DropZone /></DialogBody>
            <DialogFooter>
              <svg width="11" height="11" viewBox="0 0 11 11"><path d="M1 10 L10 1 M6 10 L10 6" stroke="#666" strokeWidth="1.200" /></svg>
            </DialogFooter>
          </DialogFrame>
        </Dialog>
      </Page>
      <Scrollbar>
        <ScrollArrow $h={31} />
        <ScrollThumb />
        <ScrollArrow $down $h={17} />
      </Scrollbar>
    </Viewport>
  </Browser>
);

const GHOSTS = [
  { x: 25, dot: "#a0705a", words: [44, 16, 66] },
  { x: 213, dot: "#4c6644", words: [44, 28] },
  { x: 395, dot: "#c09040", words: [52, 12, 50] },
  { x: 578, dot: "#3a5034", words: [42, 70] },
  { x: 765, dot: "#cfe04a", words: [46, 30, 40] },
];

const MazeApp = () => (
  <MazeWindow>
    <TitleBar>
      <ActiveGhost />
      {[191, 376, 560, 746].map((x) => <TabGap key={x} $x={x} />)}
      {GHOSTS.map((g) => (
        <TabGhost key={g.x} $x={g.x} $dot={g.dot}>
          <b />
          {g.words.map((w, i) => <i key={i} style={{ width: w }} />)}
        </TabGhost>
      ))}
      <AppIcon><JavaIcon size={16} /></AppIcon>
      <Controls $right={130} $line="#55754e">
        <Control $w={28}>
          <svg width="16" height="12" viewBox="0 0 16 12"><path d="M1 1.500 H11 V10.500 H1 Z" fill="#fff" stroke="#444c56" /><path d="M5 3 V9 M7 3 V9" stroke="#9aa" /><path d="M9 3.500 H15 V8.500 H9 Z" fill="#fff" stroke="#444c56" /><rect x="11" y="5" width="2.500" height="2" fill="#444c56" /></svg>
        </Control>
      </Controls>
      <Controls $right={5} $line="#55754e">
        <Control $w={28}><Minimize /></Control>
        <Control $w={27}>
          <svg width="12" height="10" viewBox="0 0 12 10"><rect x=".5" y=".5" width="11" height="9" fill="#b4c9ae" stroke="#7d9678" /><rect x="3.500" y="3.500" width="5" height="3" fill="#8ba386" stroke="#7d9678" /></svg>
        </Control>
        <Control $w={46}><CloseX /></Control>
      </Controls>
    </TitleBar>
    <MazePanel>
      <MazeGrid>
        {CELLS.map((kind, i) => <Cell key={i} $kind={kind} />)}
      </MazeGrid>
    </MazePanel>
  </MazeWindow>
);

export default function App() {
  return (
    <Desktop>
      <Global />
      <BrowserWindow />
      <MazeApp />
      <Taskbar>
        <Start><StartOrb /></Start>
        {APPS.map((app, i) => (
          <Slot key={i}><SlotFace $open={app.open}>{app.icon}</SlotFace></Slot>
        ))}
        <Tray>
          <TrayCaret />
          <Network />
          <Volume />
          <Drive />
          <DropTray />
          <Clock>1:43 PM<br />4/30/2015</Clock>
        </Tray>
        <ShowDesktop />
      </Taskbar>
    </Desktop>
  );
}
